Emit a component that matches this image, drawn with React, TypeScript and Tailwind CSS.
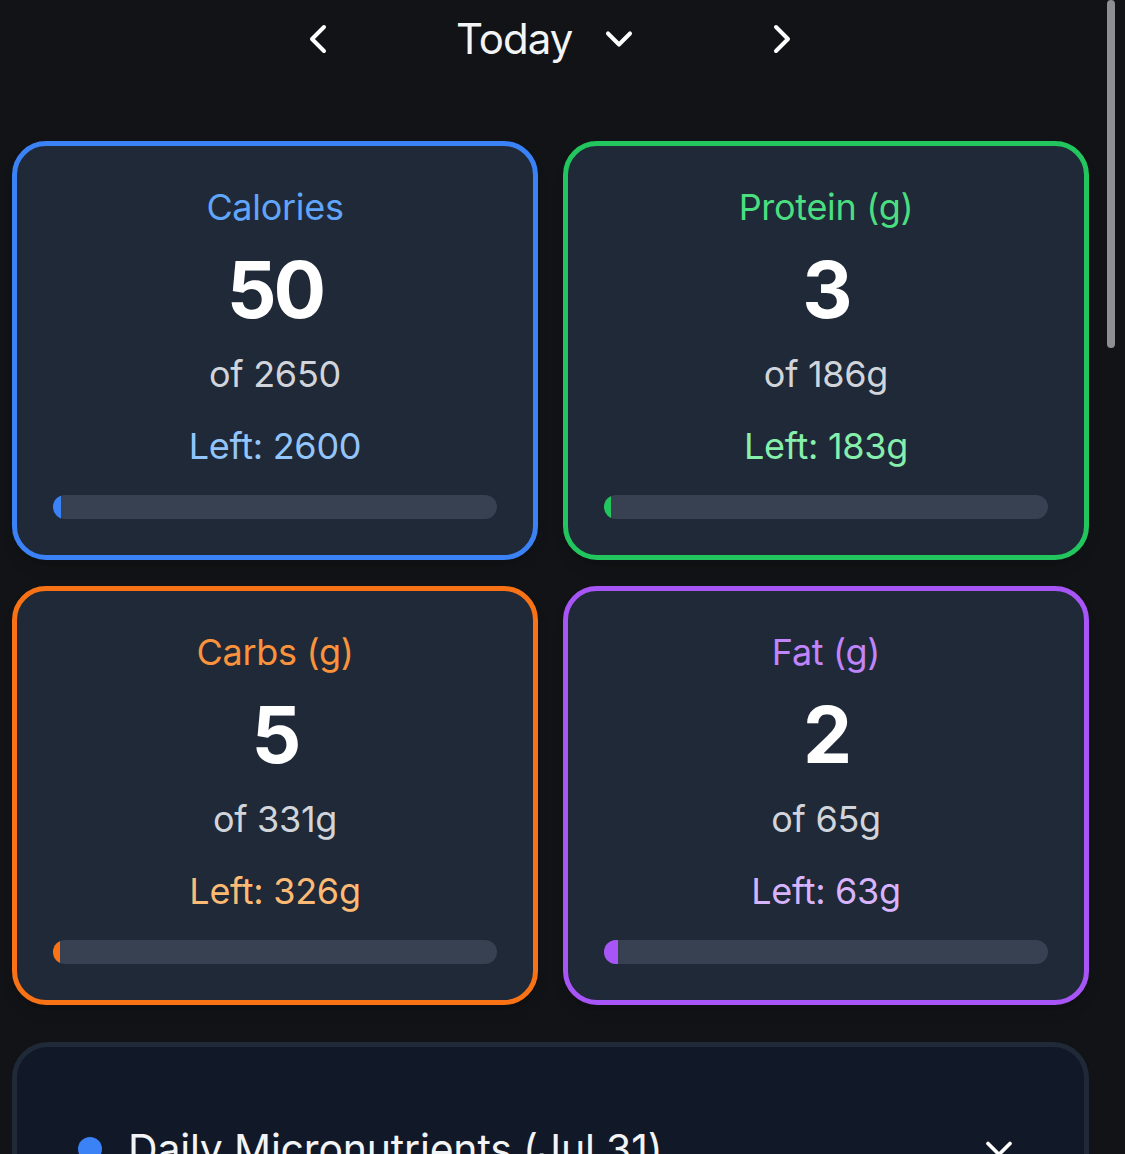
import React from "react";
import { ChevronLeft, ChevronRight, ChevronDown } from "lucide-react";

type Macro = {
  title: string;
  value: number;
  goal: number;
  unit: string;
  border: string;
  titleColor: string;
  leftColor: string;
  fill: string;
};

const macros: Macro[] = [
  { title: "Calories", value: 50, goal: 2650, unit: "", border: "border-[#3b82f6]", titleColor: "text-[#60a5fa]", leftColor: "text-[#93c5fd]", fill: "bg-[#3b82f6]" },
  { title: "Protein (g)", value: 3, goal: 186, unit: "g", border: "border-[#22c55e]", titleColor: "text-[#4ade80]", leftColor: "text-[#86efac]", fill: "bg-[#22c55e]" },
  { title: "Carbs (g)", value: 5, goal: 331, unit: "g", border: "border-[#f97316]", titleColor: "text-[#fb923c]", leftColor: "text-[#fdba74]", fill: "bg-[#f97316]" },
  { title: "Fat (g)", value: 2, goal: 65, unit: "g", border: "border-[#a855f7]", titleColor: "text-[#c084fc]", leftColor: "text-[#d8b4fe]", fill: "bg-[#a855f7]" },
];

function MacroCard({ m }: { m: Macro }) {
  const pct = Math.min(100, (m.value / m.goal) * 100);
  return (
    <div className={`flex flex-col items-center rounded-[34px] border-[5px] ${m.border} bg-[#1f2937] px-[36px] pt-[39px] pb-[36px] shadow-lg`}>
      <div className={`text-[36px] leading-[44px] tracking-[-0.3px] ${m.titleColor}`}>{m.title}</div>
      <div className="mt-[19px] text-[78px] leading-[84px] font-bold tracking-[-3px] text-white">{m.value}</div>
      <div className="mt-[20px] text-[36px] leading-[44px] tracking-[-0.3px] text-[#d1d5db]">
        of {m.goal}
        {m.unit}
      </div>
      <div className={`mt-[28px] text-[36px] leading-[44px] tracking-[-0.3px] ${m.leftColor}`}>
        Left: {m.goal - m.value}
        {m.unit}
      </div>
      <div className="mt-[27px] h-[24px] w-full overflow-hidden rounded-full bg-[#374151]">
        <div className={`h-full ${m.fill}`} style={{ width: `${pct}%` }} />
      </div>
    </div>
  );
}

export default function App() {
  return (
    <div
      className="relative h-[1154px] w-[1125px] overflow-hidden bg-[#121316] text-white"
      style={{ fontFamily: "Inter, 'Noto Sans', sans-serif" }}
    >
      <div className="pl-[12px] pr-[36px]">
        <div className="flex h-[77px] items-center pl-[282px]">
          <button className="flex h-[48px] w-[48px] items-center justify-center text-white">
            <ChevronLeft size={48} strokeWidth={2} />
          </button>
          <div className="ml-[114px] flex items-center">
            <span className="text-[42px] leading-[50px] tracking-[-1px] text-[#f3f4f6]">Today</span>
            <ChevronDown size={44} strokeWidth={2.2} className="ml-[25px] text-white" />
          </div>
          <button className="ml-[117px] flex h-[48px] w-[48px] items-center justify-center text-white">
            <ChevronRight size={48} strokeWidth={2} />
          </button>
        </div>

        <div className="mt-[64px] grid grid-cols-2 gap-x-[25px] gap-y-[26px]">
          {macros.map((m) => (
            <MacroCard key={m.title} m={m} />
          ))}
        </div>

        <div className="mt-[37px] h-[300px] rounded-[36px] border-[5px] border-[#1f2937] bg-[#111827]">
          <div className="flex items-center pl-[61px] pr-[63px] pt-[78px]">
            <span className="h-[24px] w-[24px] rounded-full bg-[#3b82f6]" />
            <span className="ml-[26px] flex-1 text-[41px] leading-[48px] tracking-[-0.2px] text-[#f3f4f6]">
              Daily Micronutrients (Jul 31)
            </span>
            <ChevronDown size={44} strokeWidth={2} className="text-white" />
          </div>
        </div>
      </div>

      <div className="absolute right-[10px] top-0 h-[348px] w-[8px] rounded-full bg-[#8e8e93]" />
    </div>
  );
}
